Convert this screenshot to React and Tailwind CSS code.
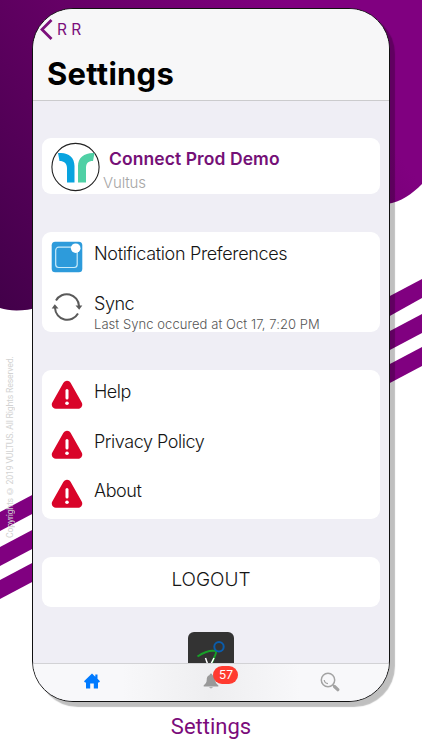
import React from 'react';

const Backdrop = () => (
    <svg className="absolute inset-0" width="422" height="750" viewBox="0 0 422 750">
        <defs>
            <linearGradient id="purple" gradientUnits="userSpaceOnUse" x1="0" y1="300" x2="330" y2="60">
                <stop offset="0" stopColor="#43004a" />
                <stop offset="0.6" stopColor="#680068" />
                <stop offset="1" stopColor="#800080" />
            </linearGradient>
        </defs>
        <path d="M0 0H422V184C412 194 401 202 387 204L40 307C24 311.500 10 311.500 0 308Z" fill="url(#purple)" />
        <g fill="#800080">
            <path d="M388 297L422 279V298L388 317Z" />
            <path d="M388 332L422 314V333L388 351Z" />
            <path d="M388 365L422 347V366L388 384Z" />
            <path d="M0 512L34 494V513L0 531Z" />
            <path d="M0 547L34 529V548L0 566Z" />
            <path d="M0 580L34 562V581L0 599Z" />
        </g>
    </svg>
);

const BrandLogo = () => (
    <svg className="shrink-0 -ml-[0.5px]" width="50" height="50" viewBox="0 0 50 50">
        <circle cx="24.5" cy="25" r="23.6" fill="#fff" stroke="#222" strokeWidth="1.1" />
        <path d="M7 11H10C18 11 23.5 16 23.5 24V40.500H16V26C16 21.500 13 19 8.500 19Z" fill="#08a3df" />
        <path d="M43.500 11H42C33 11 27 16 27 24V40.500H35V26C35 21.500 37 19 42 19Z" fill="#4fd0a5" />
    </svg>
);

const NotificationIcon = () => (
    <svg className="shrink-0" width="32" height="32" viewBox="0 0 32 32">
        <rect x="0.700" y="0.700" width="30.600" height="30.600" rx="3.500" fill="#2d9bdb" />
        <rect x="4.700" y="6.200" width="21.500" height="20.300" rx="3" fill="none" stroke="#c9ecfb" strokeWidth="1.200" />
        <circle cx="24.700" cy="7.200" r="4.800" fill="#fff" />
    </svg>
);

const SyncIcon = () => (
    <svg className="shrink-0" width="32" height="32" viewBox="0 0 32 32">
        <g fill="none" stroke="#5a5a5a" strokeWidth="2">
            <path d="M5 9.500A12.300 12.300 0 0 1 28 15" />
            <path d="M27 22.500A12.300 12.300 0 0 1 4 17" />
        </g>
        <path d="M24.500 14.500H31.300L28.200 18.800Z" fill="#5a5a5a" />
        <path d="M0.700 17.500H7.500L3.800 13.200Z" fill="#5a5a5a" />
    </svg>
);

const WarningIcon = () => (
    <svg className="shrink-0" width="32" height="30" viewBox="0 0 32 30">
        <path d="M16 5L27 24.500H5Z" fill="#d90429" stroke="#d90429" strokeWidth="8.500" strokeLinejoin="round" />
        <path d="M16 10.500V18" stroke="#fff" strokeWidth="3" strokeLinecap="round" />
        <circle cx="16" cy="23.300" r="1.800" fill="#fff" />
    </svg>
);

const AppIcon = () => (
    <svg width="46" height="46" viewBox="0 0 46 46">
        <rect width="46" height="46" rx="6" fill="#333" />
        <path d="M9.500 24.500C16 20 22 18 28 19C29 21 26 25 24 31" fill="none" stroke="#17a028" strokeWidth="1.900" />
        <circle cx="31" cy="14.800" r="4.700" fill="none" stroke="#0a5cab" strokeWidth="2" />
        <path d="M17.500 26L21 36L26 26" fill="none" stroke="#fff" strokeWidth="1.500" />
    </svg>
);

const HomeIcon = () => (
    <svg width="18" height="18" viewBox="0 0 18 18">
        <path d="M9 1.500L1 9.200L2 10.400H3V16.500H7.200V11.500H10.800V16.500H15V10.400H16L17 9.200L14.500 6.800V2.500H12.300V4.700Z" fill="#007aff" />
    </svg>
);

const BellIcon = () => (
    <svg width="16" height="16" viewBox="0 0 16 16">
        <path d="M8 0.500C9 0.500 9.300 1.300 9.300 2C11.500 2.700 12.300 4.500 12.300 7C12.300 9.500 13.500 10.800 15.300 12.300V13.500H0.700V12.300C2.500 10.800 3.700 9.500 3.700 7C3.700 4.500 4.500 2.700 6.700 2C6.700 1.300 7 0.500 8 0.500Z" fill="#999" />
        <path d="M6.300 14.300H9.700C9.500 15.700 6.500 15.700 6.300 14.300Z" fill="#999" />
    </svg>
);

const SearchIcon = () => (
    <svg width="20" height="20" viewBox="0 0 20 20" fill="none" stroke="#a3a3a3">
        <circle cx="8" cy="8" r="6.700" strokeWidth="1.500" />
        <path d="M4.200 8C4.500 10 6 11.500 8 11.600" strokeWidth="1.200" />
        <path d="M12.700 12.700L14.500 14.500" strokeWidth="1.500" />
        <path d="M14.500 14.500L17.800 17.700" strokeWidth="3.200" strokeLinecap="round" />
    </svg>
);

const links = ['Help', 'Privacy Policy', 'About'];

export default function App() {
    return (
        <div className="relative w-[422px] h-[750px] overflow-hidden bg-white font-[Inter,sans-serif] text-[#151515]">
            <Backdrop />
            <p className="absolute left-[4px] top-[356px] h-[182px] text-[8.8px] leading-[13px] text-[#d2d2d2] whitespace-nowrap [writing-mode:vertical-rl] rotate-180 tracking-[-0.220px] font-[Roboto,sans-serif]">
                Copyrights © 2019 VULTUS. All Rights Reserved.
            </p>

            <div className="relative ml-[32px] pt-[8px] w-[358px]">
                <div className="flex flex-col h-[694px] rounded-[41px] border-[1.5px] border-[#111] bg-[#efeef5] overflow-hidden shadow-[5px_5px_1px_rgba(0,0,0,0.25)]">
                    <header className="h-[92px] shrink-0 border-b border-[#cbcbcd] bg-[#f7f7f8]">
                        <div className="flex items-center h-[41px] pl-[7px] gap-[4px] text-[#7c107c]">
                            <svg width="13" height="21" viewBox="0 0 13 21" fill="none" stroke="currentColor" strokeWidth="2.800">
                                <path d="M11.500 1L2 10.500L11.500 20" />
                            </svg>
                            <span className="text-[15.500px]">R R</span>
                        </div>
                        <h1 className="pl-[14px] pt-[5px] text-[31px] leading-[38px] font-bold tracking-[0.250px] text-black">Settings</h1>
                    </header>

                    <main className="flex flex-col flex-1 min-h-0 overflow-hidden px-[9px] pt-[37px] gap-[38px]">
                        <section className="flex h-[56px] shrink-0 pl-[9px] pt-[4px] rounded-[9px] bg-white">
                            <BrandLogo />
                            <div className="pl-[2.5px] pt-[5px]">
                                <h2 className="pl-[6px] text-[17.500px] leading-[24px] font-semibold tracking-[0.080px] text-[#751077]">Connect Prod Demo</h2>
                                <p className="text-[15px] leading-[23px] font-light tracking-[-0.150px] text-[#a5a5a5]">Vultus</p>
                            </div>
                        </section>

                        <section className="h-[100px] shrink-0 rounded-[9px] bg-white pl-[9px]">
                            <div className="flex h-[50px] gap-[11px] pt-[9px]">
                                <NotificationIcon />
                                <span className="text-[18px] leading-[25px] font-light tracking-[-0.340px]">Notification Preferences</span>
                            </div>
                            <div className="flex h-[50px] gap-[11px] pt-[9px]">
                                <SyncIcon />
                                <div>
                                    <p className="text-[18px] leading-[25px] font-light tracking-[-0.450px]">Sync</p>
                                    <p className="text-[13px] leading-[17px] font-light tracking-[0.060px] text-[#555]">Last Sync occured at Oct 17, 7:20 PM</p>
                                </div>
                            </div>
                        </section>

                        <section className="h-[149px] shrink-0 rounded-[9px] bg-white pl-[9px]">
                            {links.map((label) => (
                                <div key={label} className="flex h-[49.700px] gap-[11px] pt-[10px]">
                                    <WarningIcon />
                                    <span className="text-[18px] leading-[24px] font-light tracking-[-0.450px]">{label}</span>
                                </div>
                            ))}
                        </section>

                        <button className="h-[50px] shrink-0 rounded-[9px] bg-white pb-[4px] text-[19px] font-light">LOGOUT</button>

                        <div className="flex justify-center shrink-0 -mt-[13px]">
                            <AppIcon />
                        </div>
                    </main>

                    <nav className="grid grid-cols-3 h-[38px] shrink-0 justify-items-center border-t border-[#d2d2d5] bg-[linear-gradient(90deg,#f8f8fa_25%,#eeeef0_50%,#f8f8fa_75%)] pt-[8px]">
                        <HomeIcon />
                        <div className="relative pt-[1px]">
                            <BellIcon />
                            <span className="absolute left-[10.5px] -top-[6px] flex items-center justify-center w-[25px] h-[18px] rounded-full bg-[#ff3b30] text-[12px] text-white">57</span>
                        </div>
                        <SearchIcon />
                    </nav>
                </div>
            </div>

            <p className="relative pt-[10px] text-center text-[22px] leading-[30px] text-[#7b0b7b] font-[Roboto,sans-serif]">Settings</p>
        </div>
    );
}
